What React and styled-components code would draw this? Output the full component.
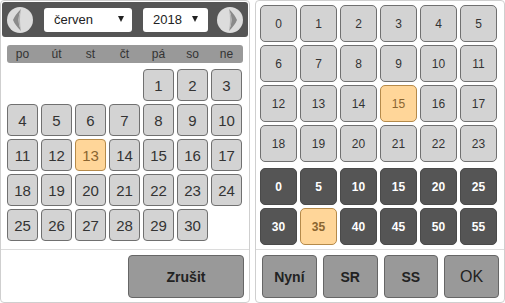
import styled, { createGlobalStyle, css } from "styled-components";

const GlobalStyle = createGlobalStyle`
  html, body {
    margin: 0;
    padding: 0;
    background: #fff;
    font-family: "Liberation Sans", Arial, sans-serif;
  }
  * {
    box-sizing: border-box;
  }
`;

const weekDays = ["po", "út", "st", "čt", "pá", "so", "ne"];
const hours = Array.from({ length: 24 }, (_, i) => i);
const minutes = Array.from({ length: 12 }, (_, i) => i * 5);

const Chevron = ({ dir }) => (
  <svg width="26" height="26" viewBox="0 0 26 26">
    <g transform={dir === "right" ? "matrix(-1 0 0 1 26 0)" : undefined}>
      <path d="M14 2 Q8 8 6 13 Q8 18 14 24 Q11.5 18 11.5 13 Q11.5 8 14 2 Z" fill="#8a8a8a" />
      <path d="M14 2 Q11.5 8 11.5 13 Q11.5 18 14 24 Q13 18 13 13 Q13 8 14 2 Z" fill="#b5b5b5" />
    </g>
  </svg>
);

const App = () => {
  // June 2018 starts on Friday
  const days = Array.from({ length: 30 }, (_, i) => i + 1);
  return (
    <>
      <GlobalStyle />
      <Wrapper>
        <Panel>
          <Header>
            <RoundButton>
              <Chevron dir="left" />
            </RoundButton>
            <Select $width={88} $gap={11} $padRight={8}>
              <span>červen</span>
              <Caret />
            </Select>
            <Select $width={65} $gap={11} $padRight={10}>
              <span>2018</span>
              <Caret />
            </Select>
            <Spacer />
            <RoundButton>
              <Chevron dir="right" />
            </RoundButton>
          </Header>
          <WeekBar>
            {weekDays.map((d) => (
              <WeekDay key={d}>{d}</WeekDay>
            ))}
          </WeekBar>
          <DayGrid>
            {days.map((d) => (
              <DayCell key={d} $start={d === 1 ? 5 : null} $active={d === 13}>
                {d}
              </DayCell>
            ))}
          </DayGrid>
          <Footer $end>
            <ActionButton $width={116}>Zrušit</ActionButton>
          </Footer>
        </Panel>

        <Panel>
          <HourGrid>
            {hours.map((h) => (
              <TimeCell key={h} $active={h === 15}>
                {h}
              </TimeCell>
            ))}
          </HourGrid>
          <MinuteGrid>
            {minutes.map((m) => (
              <TimeCell key={m} $dark $active={m === 35}>
                {m}
              </TimeCell>
            ))}
          </MinuteGrid>
          <Footer>
            <ActionButton $grow>Nyní</ActionButton>
            <ActionButton $grow>SR</ActionButton>
            <ActionButton $grow>SS</ActionButton>
            <ActionButton $grow $plain>
              OK
            </ActionButton>
          </Footer>
        </Panel>
      </Wrapper>
    </>
  );
};

export default App;

const Wrapper = styled.div`
  display: flex;
  gap: 5px;
  width: 505px;
  height: 303px;
`;

const Panel = styled.div`
  width: 250px;
  height: 303px;
  border: 1px solid #cfcfcf;
  border-radius: 4px;
  padding: 1px;
  display: flex;
  flex-direction: column;
`;

const Header = styled.div`
  display: flex;
  align-items: center;
  height: 35px;
  padding: 0 5px;
  background: #555;
  border-radius: 3px;
`;

const Spacer = styled.div`
  flex: 1;
`;

const RoundButton = styled.div`
  width: 26px;
  height: 26px;
  border-radius: 50%;
  background: #dcdcdc;
  display: flex;
  align-items: center;
  justify-content: center;
  flex-shrink: 0;
`;

const Select = styled.div`
  display: flex;
  align-items: center;
  justify-content: space-between;
  width: ${(p) => p.$width}px;
  height: 24px;
  margin-left: ${(p) => p.$gap}px;
  padding: 0 ${(p) => p.$padRight}px 1px 10px;
  background: #fff;
  border-radius: 3px;
  font-size: 13px;
  color: #222;
`;

const Caret = styled.span`
  width: 0;
  height: 0;
  border-left: 3px solid transparent;
  border-right: 3px solid transparent;
  border-top: 6px solid #222;
`;

const WeekBar = styled.div`
  display: grid;
  grid-template-columns: repeat(7, 31px);
  column-gap: 3px;
  height: 18px;
  margin: 8px 0 0 5px;
  width: 236px;
  background: #999;
  border-radius: 3px;
`;

const WeekDay = styled.div`
  display: flex;
  align-items: center;
  justify-content: center;
  font-size: 12px;
  color: #333;
`;

const DayGrid = styled.div`
  display: grid;
  grid-template-columns: repeat(7, 31px);
  grid-auto-rows: 32px;
  gap: 3px;
  margin: 6px 0 0 5px;
`;

const activeCell = css`
  background: #ffd699;
  border-color: #b58a4a;
  color: #8a6530;
`;

const DayCell = styled.div`
  display: flex;
  align-items: center;
  justify-content: center;
  grid-column-start: ${(p) => p.$start ?? "auto"};
  background: #d3d3d3;
  border: 1px solid #707070;
  border-radius: 4px;
  font-size: 15px;
  color: #333;
  ${(p) => p.$active && activeCell}
`;

const HourGrid = styled.div`
  display: grid;
  grid-template-columns: repeat(6, 37px);
  grid-auto-rows: 37px;
  gap: 3px;
  margin: 3px 0 0 3px;
`;

const MinuteGrid = styled(HourGrid)`
  margin-top: 6px;
`;

const TimeCell = styled.div`
  display: flex;
  align-items: center;
  justify-content: center;
  border-radius: 5px;
  font-size: 12px;
  background: ${(p) => (p.$dark ? "#555" : "#d3d3d3")};
  border: 1px solid ${(p) => (p.$dark ? "#4a4a4a" : "#707070")};
  color: ${(p) => (p.$dark ? "#fff" : "#333")};
  font-weight: ${(p) => (p.$dark ? "bold" : "normal")};
  ${(p) => p.$active && activeCell}
`;

const Footer = styled.div`
  display: flex;
  justify-content: ${(p) => (p.$end ? "flex-end" : "flex-start")};
  gap: 6px;
  margin: auto -1px 0;
  border-top: 1px solid #dcdcdc;
  padding: 5px 5px 3px 6px;
`;

const ActionButton = styled.div`
  display: flex;
  align-items: center;
  justify-content: center;
  height: 43px;
  width: ${(p) => (p.$width ? `${p.$width}px` : "auto")};
  flex: ${(p) => (p.$grow ? 1 : "none")};
  background: #999;
  border: 1px solid #666;
  border-radius: 4px;
  color: #222;
  font-size: ${(p) => (p.$plain ? 16 : 14)}px;
  font-weight: ${(p) => (p.$plain ? "normal" : "bold")};
`;
